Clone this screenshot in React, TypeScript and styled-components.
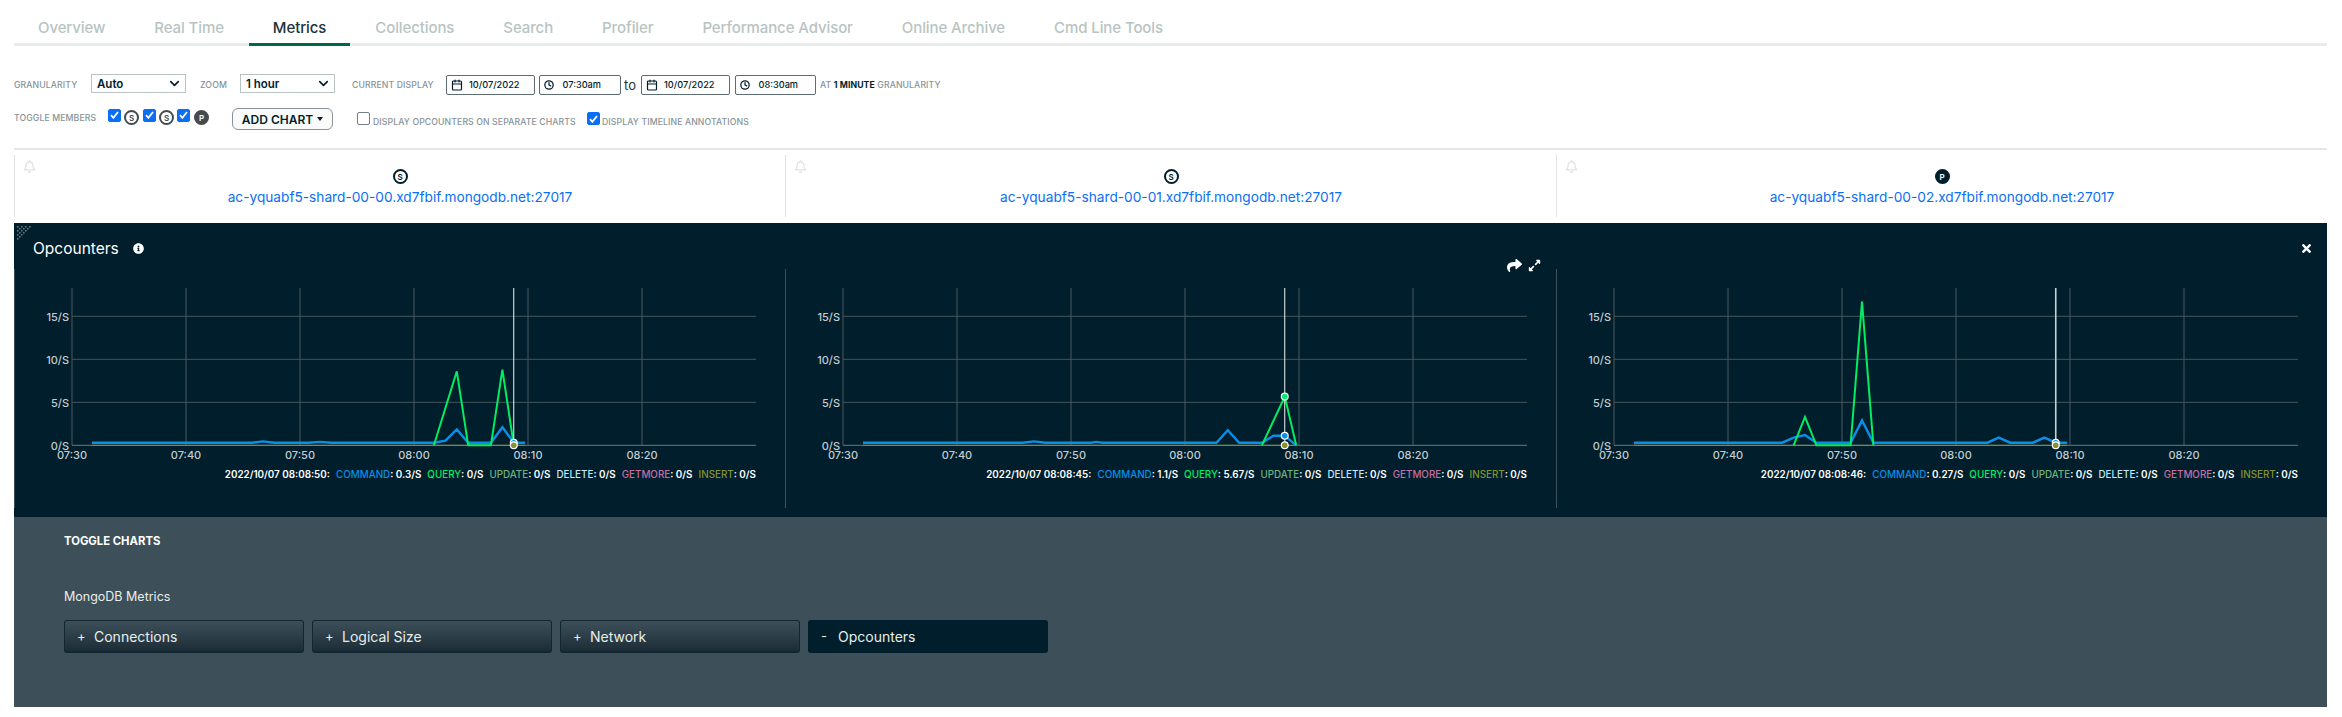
import React from 'react';
import styled, { createGlobalStyle } from 'styled-components';
import { Calendar, ChevronDown, Clock } from 'lucide-react';
import { FaExpandAlt, FaInfoCircle, FaRegBell, FaShare, FaTimes } from 'react-icons/fa';

const GlobalStyle = createGlobalStyle`
  html, body { margin: 0; padding: 0; background: #fff; }
  body { font-family: Inter, "Liberation Sans", sans-serif; color: #001e2b; }
`;

const Page = styled.div`
  width: 2313px;
  padding: 12px 15px 10px 14px;
`;

/* Tabs */
const TabBar = styled.nav`
  display: flex;
  height: 31px;
  border-bottom: 3px solid #e8edeb;
`;

const Tab = styled.a<{ $active?: boolean }>`
  display: flex;
  align-items: center;
  height: 34px;
  margin-right: 1px;
  padding: 0 24px;
  box-sizing: border-box;
  font-size: 15px;
  font-weight: 500;
  letter-spacing: -0.1px;
  color: ${(p) => (p.$active ? '#21313c' : '#b8c4c2')};
  border-bottom: 3px solid ${(p) => (p.$active ? '#00684a' : 'transparent')};
`;

/* Filter controls */
const Controls = styled.section`
  padding-top: 28px;
  height: 74px;
  border-bottom: 2px solid #e4e6e6;
`;

const Row = styled.div<{ $top?: number }>`
  display: flex;
  align-items: center;
  height: 21px;
  margin-top: ${(p) => p.$top ?? 0}px;
`;

const Caption = styled.span<{ $gap: number; $width?: number; $top?: number }>`
  flex: none;
  width: ${(p) => (p.$width ? `${p.$width}px` : 'auto')};
  margin: ${(p) => p.$top ?? 0}px ${(p) => p.$gap}px 0 0;
  font-size: 8.7px;
  font-weight: 500;
  letter-spacing: 0.1px;
  text-transform: uppercase;
  white-space: nowrap;
  color: #889397;
  b { font-weight: 700; color: #001e2b; }
`;

const SelectBox = styled.div<{ $gap: number }>`
  position: relative;
  flex: none;
  width: 95px;
  height: 19px;
  margin: -2px ${(p) => p.$gap}px 0 0;
  svg {
    position: absolute;
    top: 2px;
    right: 4px;
    pointer-events: none;
  }
`;

const Select = styled.select`
  appearance: none;
  display: block;
  width: 100%;
  height: 100%;
  padding: 0 0 0 5px;
  box-sizing: border-box;
  border: 1px solid #b8c4c2;
  border-radius: 0;
  background: #fff;
  font: 600 11.5px Inter, sans-serif;
  color: #001e2b;
`;

const Stamp = styled.div<{ $width: number; $gap: number }>`
  display: flex;
  flex: none;
  align-items: center;
  gap: 6px;
  width: ${(p) => p.$width}px;
  height: 20px;
  margin-right: ${(p) => p.$gap}px;
  padding-left: 4px;
  box-sizing: border-box;
  border: 1px solid #5d6c74;
  border-radius: 2px;
  font-size: 9.2px;
  font-weight: 500;
  white-space: nowrap;
`;

const To = styled.span`
  flex: none;
  width: 13px;
  margin-right: 4px;
  font-size: 13px;
  color: #21313c;
`;

const Check = styled.span<{ $on?: boolean; $gap: number; $top?: number }>`
  display: flex;
  flex: none;
  align-items: center;
  justify-content: center;
  width: 13px;
  height: 13px;
  margin: ${(p) => p.$top ?? 0}px ${(p) => p.$gap}px 0 0;
  box-sizing: border-box;
  border: 1px solid ${(p) => (p.$on ? '#0b6ef6' : '#747f84')};
  border-radius: 2px;
  background: ${(p) => (p.$on ? '#0b6ef6' : '#fff')};
`;

const Badge = styled.span<{ $primary?: boolean; $dark?: boolean; $gap?: number }>`
  display: flex;
  flex: none;
  align-items: center;
  justify-content: center;
  width: 15px;
  height: 15px;
  margin-right: ${(p) => p.$gap ?? 0}px;
  box-sizing: border-box;
  border-radius: 50%;
  border: 2px solid ${(p) => (p.$dark ? '#001e2b' : '#444b4f')};
  background: ${(p) => (p.$primary ? (p.$dark ? '#001e2b' : '#444b4f') : '#fff')};
  color: ${(p) => (p.$primary ? '#fff' : p.$dark ? '#001e2b' : '#444b4f')};
  font-size: 8px;
  font-weight: 600;
  line-height: 1;
`;

const AddChart = styled.button`
  display: flex;
  flex: none;
  align-items: center;
  justify-content: center;
  gap: 4px;
  width: 101px;
  height: 22px;
  margin: 3px 24px 0 0;
  padding: 0;
  border: 1px solid #889397;
  border-radius: 6px;
  background: #f9fbfa;
  font: 600 12px Inter, sans-serif;
  color: #001e2b;
  white-space: nowrap;
`;

const Caret = styled.span`
  width: 0;
  height: 0;
  border-left: 3.5px solid transparent;
  border-right: 3.5px solid transparent;
  border-top: 4px solid #001e2b;
`;

/* Hosts */
const Hosts = styled.div`
  display: grid;
  grid-template-columns: repeat(3, 1fr);
  padding-top: 5px;
  height: 73px;
  box-sizing: border-box;
`;

const Host = styled.div`
  position: relative;
  display: flex;
  flex-direction: column;
  align-items: center;
  height: 62px;
  padding-top: 14px;
  box-sizing: border-box;
  border-left: 1px solid #e0e3e3;
  svg { position: absolute; top: 5px; left: 8px; }
`;

const HostLink = styled.a`
  margin-top: 5px;
  font-size: 13.7px;
  color: #0b6ef6;
  white-space: nowrap;
`;

/* Dark metrics panel */
const Panel = styled.section`
  position: relative;
  height: 294px;
  background: #001e2b;
  color: #fff;
`;

const Grip = styled.svg`
  position: absolute;
  top: 3px;
  left: 3px;
`;

const PanelHead = styled.header`
  display: flex;
  align-items: center;
  justify-content: space-between;
  height: 46px;
  padding: 4px 14px 0 19px;
  box-sizing: border-box;
`;

const Title = styled.h2`
  display: flex;
  align-items: center;
  gap: 14px;
  margin: 0;
  font-size: 15.5px;
  font-weight: 400;
`;

const Charts = styled.div`
  display: grid;
  grid-template-columns: repeat(3, 1fr);
`;

const ChartCol = styled.div`
  position: relative;
  height: 239px;
  border-left: 1px solid #3d4f58;
  box-sizing: border-box;
`;

const ChartTools = styled.div`
  position: absolute;
  top: -11px;
  right: 15px;
  display: flex;
  gap: 6px;
  align-items: center;
`;

const Plot = styled.svg`
  display: block;
  width: 770px;
  height: 195px;
`;

const AxisText = styled.text`
  font: 500 11px Inter, sans-serif;
  fill: #c3ccd0;
`;

const Legend = styled.div`
  display: flex;
  justify-content: flex-end;
  gap: 6px;
  height: 20px;
  align-items: center;
  padding-right: 29px;
  font-size: 9.85px;
  font-weight: 600;
  white-space: nowrap;
`;

const LegendName = styled.span<{ $color: string }>`
  color: ${(p) => p.$color};
  font-weight: 500;
`;

/* Toggle charts */
const Toggles = styled.section`
  height: 190px;
  padding: 17px 50px 0;
  box-sizing: border-box;
  background: #3d4f58;
  color: #fff;
`;

const TogglesTitle = styled.h3`
  margin: 0;
  height: 14px;
  line-height: 14px;
  font-size: 11.3px;
  font-weight: 700;
  text-transform: uppercase;
`;

const Group = styled.div`
  margin-top: 41px;
  height: 16px;
  line-height: 16px;
  font-size: 12.5px;
  color: #e7eeec;
`;

const ToggleRow = styled.div`
  display: flex;
  gap: 8px;
  margin-top: 15px;
`;

const ToggleButton = styled.button<{ $on?: boolean }>`
  display: flex;
  align-items: center;
  gap: 11px;
  width: 240px;
  height: 33px;
  padding: 0 0 0 12px;
  box-sizing: border-box;
  border: 1px solid ${(p) => (p.$on ? '#001e2b' : '#112733')};
  border-bottom-width: 2px;
  border-radius: 3px;
  background: ${(p) => (p.$on ? '#001e2b' : 'linear-gradient(#3d4f58, #1c2d38)')};
  font: 400 14px Inter, sans-serif;
  color: #e7eeec;
  span { width: 6px; font-size: 13px; }
`;

/* Chart data */
const PX_PER_MIN = 11.4;
const PX_PER_UNIT = 8.6;
const X0 = 57;
const Y0 = 176.3;
const xAt = (m: number) => X0 + (m - 0.25) * PX_PER_MIN;
const yAt = (v: number) => Y0 - v * PX_PER_UNIT;
const toPath = (pts: number[][]) => pts.map(([m, v]) => `${xAt(m).toFixed(1)},${yAt(v).toFixed(1)}`).join(' ');

type ChartData = {
  command: number[][];
  query: number[][];
  cursor: number;
  cursorWide?: boolean;
  marks?: { v: number; color: string }[];
  stamp: string;
  values: string[];
};

const COL_NAMES: [string, string][] = [
  ['COMMAND', '#0a8fe6'],
  ['QUERY', '#00ed64'],
  ['UPDATE', '#71b27c'],
  ['DELETE', '#c3e7fe'],
  ['GETMORE', '#c56fa3'],
  ['INSERT', '#84932f'],
];

const CHARTS: ChartData[] = [
  {
    command: [[2, 0.3], [16, 0.3], [17, 0.45], [18, 0.3], [21, 0.3], [22, 0.4], [23, 0.3], [32, 0.3], [33, 0.55], [34, 1.85], [35, 0.3], [37, 0.3], [38, 2.1], [39, 0.3], [40, 0.3]],
    query: [[32, 0], [34, 8.6], [35, 0], [37, 0], [38, 8.8], [39, 0]],
    cursor: 39,
    marks: [{ v: 0.3, color: '#0a8fe6' }, { v: 0, color: '#84932f' }],
    stamp: '2022/10/07 08:08:50:',
    values: ['0.3/S', '0/S', '0/S', '0/S', '0/S', '0/S'],
  },
  {
    command: [[2, 0.3], [16, 0.3], [17, 0.45], [18, 0.3], [22, 0.3], [22.5, 0.4], [23, 0.3], [33, 0.3], [34, 1.75], [35, 0.3], [37, 0.3], [38, 1.1], [39, 1.1], [40, 0]],
    query: [[37, 0], [39, 5.67], [40, 0]],
    cursor: 39,
    marks: [{ v: 5.67, color: '#00ed64' }, { v: 1.1, color: '#0a8fe6' }, { v: 0, color: '#84932f' }],
    stamp: '2022/10/07 08:08:45:',
    values: ['1.1/S', '5.67/S', '0/S', '0/S', '0/S', '0/S'],
  },
  {
    command: [[2, 0.3], [15, 0.3], [16, 0.9], [17, 1.2], [18, 0.3], [21, 0.3], [22, 2.9], [23, 0.3], [33, 0.3], [34, 0.9], [35, 0.3], [37, 0.3], [38, 0.9], [39, 0.3], [40, 0.3]],
    query: [[16, 0], [17, 3.3], [18, 0], [21, 0], [22, 16.7], [23, 0]],
    cursor: 39,
    cursorWide: true,
    marks: [{ v: 0.3, color: '#0a8fe6' }, { v: 0, color: '#84932f' }],
    stamp: '2022/10/07 08:08:46:',
    values: ['0.27/S', '0/S', '0/S', '0/S', '0/S', '0/S'],
  },
];

const HOSTS: { name: string; primary?: boolean }[] = [
  { name: 'ac-yquabf5-shard-00-00.xd7fbif.mongodb.net:27017' },
  { name: 'ac-yquabf5-shard-00-01.xd7fbif.mongodb.net:27017' },
  { name: 'ac-yquabf5-shard-00-02.xd7fbif.mongodb.net:27017', primary: true },
];

const TABS = ['Overview', 'Real Time', 'Metrics', 'Collections', 'Search', 'Profiler', 'Performance Advisor', 'Online Archive', 'Cmd Line Tools'];
const TICKS = ['07:30', '07:40', '07:50', '08:00', '08:10', '08:20'];
const GRIP_DOTS = [[0, 0], [4, 0], [8, 0], [12, 0], [2, 2], [6, 2], [10, 2], [0, 4], [4, 4], [8, 4], [2, 6], [6, 6], [0, 8], [4, 8], [2, 10], [0, 12]];

const Tick = () => (
  <svg width="9" height="8" viewBox="0 0 9 8" fill="none">
    <path d="M1 4.2 L3.4 6.8 L8 1" stroke="#fff" strokeWidth="1.8" />
  </svg>
);

const Chart: React.FC<{ data: ChartData; tools?: boolean }> = ({ data, tools }) => {
  const cursorX = xAt(data.cursor);
  return (
    <ChartCol>
      {tools && (
        <ChartTools>
          <FaShare size={15} color="#fff" />
          <FaExpandAlt size={13} color="#fff" />
        </ChartTools>
      )}
      <Plot viewBox="0 0 770 195">
        {[0, 1, 2, 3, 4, 5].map((i) => (
          <line key={i} x1={X0 + i * 114} x2={X0 + i * 114} y1="19" y2={Y0} stroke="#4a5b63" strokeWidth="1" />
        ))}
        {[1, 2, 3].map((i) => (
          <line key={i} x1={X0} x2={X0 + 684} y1={yAt(i * 5)} y2={yAt(i * 5)} stroke="#47555b" strokeWidth="1" />
        ))}
        <line x1={X0} x2={X0 + 684} y1={Y0} y2={Y0} stroke="#6b787e" strokeWidth="1" />
        {[5, 10, 15].map((v) => (
          <AxisText key={v} x={X0 - 3} y={yAt(v) + 5} textAnchor="end">{v}/S</AxisText>
        ))}
        <AxisText x={X0 - 3} y={Y0 + 5} textAnchor="end">0/S</AxisText>
        {TICKS.map((t, i) => (
          <AxisText key={t} x={X0 + i * 114} y={190} textAnchor="middle">{t}</AxisText>
        ))}
        <polyline points={toPath([[2, 0], [40, 0]])} fill="none" stroke="#84932f" strokeWidth="1" />
        <polyline points={toPath(data.command)} fill="none" stroke="#0a8fe6" strokeWidth="2.4" />
        <polyline points={toPath(data.query)} fill="none" stroke="#00ed64" strokeWidth="2" />
        <line x1={cursorX} x2={cursorX} y1="19" y2={Y0} stroke={data.cursorWide ? '#c9cfd2' : '#f2f4f5'} strokeWidth={data.cursorWide ? 1.6 : 1} />
        {data.marks?.map((m) => (
          <circle key={m.color} cx={cursorX} cy={yAt(m.v)} r="3.4" fill={m.color} stroke="#fff" strokeWidth="1.2" />
        ))}
      </Plot>
      <Legend>
        <span>{data.stamp}</span>
        {COL_NAMES.map(([name, color], i) => (
          <span key={name}>
            <LegendName $color={color}>{name}</LegendName>: {data.values[i]}
          </span>
        ))}
      </Legend>
    </ChartCol>
  );
};

export default function App() {
  return (
    <Page>
      <GlobalStyle />
      <TabBar>
        {TABS.map((t) => (
          <Tab key={t} $active={t === 'Metrics'}>{t}</Tab>
        ))}
      </TabBar>

      <Controls>
        <Row>
          <Caption $gap={12} $width={65}>Granularity</Caption>
          <SelectBox $gap={14}>
            <Select defaultValue="Auto"><option>Auto</option></Select>
            <ChevronDown size={15} strokeWidth={2.6} />
          </SelectBox>
          <Caption $gap={13} $width={27}>Zoom</Caption>
          <SelectBox $gap={17}>
            <Select defaultValue="1 hour"><option>1 hour</option></Select>
            <ChevronDown size={15} strokeWidth={2.6} />
          </SelectBox>
          <Caption $gap={13} $width={81}>Current display</Caption>
          <Stamp $width={89} $gap={4}><Calendar size={12} strokeWidth={2.4} />10/07/2022</Stamp>
          <Stamp $width={82} $gap={3}><Clock size={10} strokeWidth={3} />&nbsp;07:30am</Stamp>
          <To>to</To>
          <Stamp $width={89} $gap={5}><Calendar size={12} strokeWidth={2.4} />10/07/2022</Stamp>
          <Stamp $width={81} $gap={4}><Clock size={10} strokeWidth={3} />&nbsp;08:30am</Stamp>
          <Caption $gap={0}>At <b>1 minute</b> granularity</Caption>
        </Row>
        <Row $top={12}>
          <Caption $gap={13} $width={81}>Toggle members</Caption>
          <Check $on $gap={3} $top={-5}><Tick /></Check>
          <Badge $gap={4}>S</Badge>
          <Check $on $gap={3} $top={-5}><Tick /></Check>
          <Badge $gap={3}>S</Badge>
          <Check $on $gap={4} $top={-5}><Tick /></Check>
          <Badge $primary $gap={23}>P</Badge>
          <AddChart>ADD CHART <Caret /></AddChart>
          <Check $gap={3} $top={2} />
          <Caption $gap={13} $width={201} $top={9}>Display opcounters on separate charts</Caption>
          <Check $on $gap={2} $top={2}><Tick /></Check>
          <Caption $gap={0} $top={9}>Display timeline annotations</Caption>
        </Row>
      </Controls>

      <Hosts>
        {HOSTS.map((h) => (
          <Host key={h.name}>
            <FaRegBell size={13} color="#dfe2e2" />
            <Badge $dark $primary={h.primary}>{h.primary ? 'P' : 'S'}</Badge>
            <HostLink>{h.name}</HostLink>
          </Host>
        ))}
      </Hosts>

      <Panel>
        <Grip width="15" height="15" viewBox="0 0 15 15">
          {GRIP_DOTS.map(([x, y]) => (
            <rect key={`${x}-${y}`} x={x} y={y} width="1.6" height="1.6" fill="#66757c" />
          ))}
        </Grip>
        <PanelHead>
          <Title>Opcounters <FaInfoCircle size={11} /></Title>
          <FaTimes size={13} color="#fff" />
        </PanelHead>
        <Charts>
          {CHARTS.map((c, i) => (
            <Chart key={c.stamp} data={c} tools={i === 1} />
          ))}
        </Charts>
      </Panel>

      <Toggles>
        <TogglesTitle>Toggle charts</TogglesTitle>
        <Group>MongoDB Metrics</Group>
        <ToggleRow>
          <ToggleButton><span>+</span>Connections</ToggleButton>
          <ToggleButton><span>+</span>Logical Size</ToggleButton>
          <ToggleButton><span>+</span>Network</ToggleButton>
          <ToggleButton $on><span>-</span>Opcounters</ToggleButton>
        </ToggleRow>
      </Toggles>
    </Page>
  );
}
